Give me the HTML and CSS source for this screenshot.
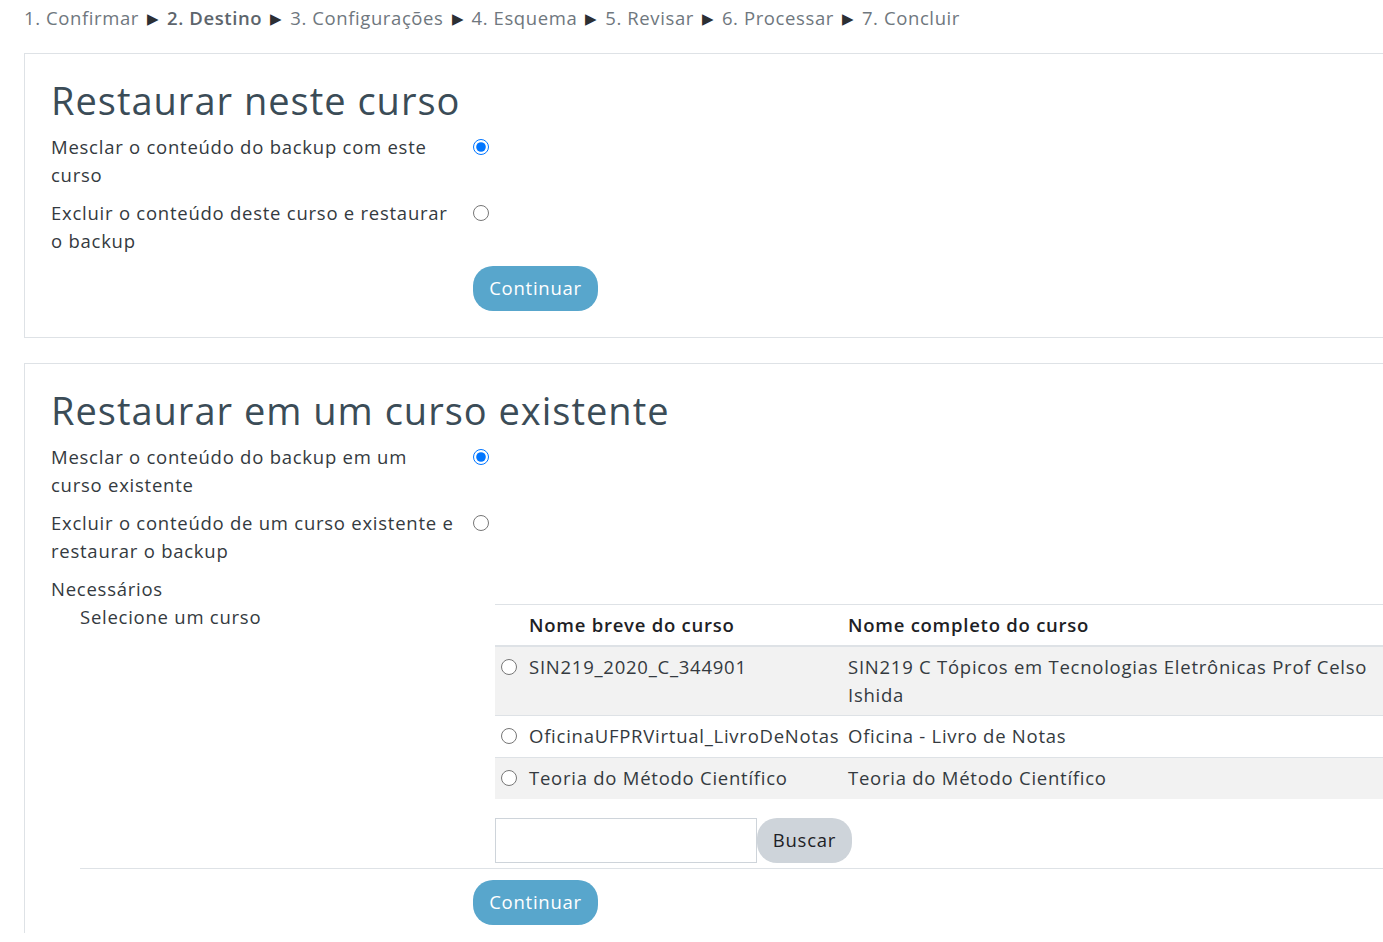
FILE: index.html
```html
<!DOCTYPE html>
<html lang="pt-BR">
<head>
<meta charset="utf-8">
<title>Restaurar</title>
<link rel="stylesheet" href="styles.css">
</head>
<body>
<div class="page">
  <nav class="steps">
    <span>1. Confirmar</span><span class="arrow">▶</span><span class="current">2. Destino</span><span class="arrow">▶</span><span>3. Configurações</span><span class="arrow">▶</span><span>4. Esquema</span><span class="arrow">▶</span><span>5. Revisar</span><span class="arrow">▶</span><span>6. Processar</span><span class="arrow">▶</span><span>7. Concluir</span>
  </nav>

  <section class="box box-first">
    <h2 class="title">Restaurar neste curso</h2>
    <div class="row">
      <div class="label">Mesclar o conteúdo do backup com este curso</div>
      <div class="field"><input type="radio" name="t1" checked></div>
    </div>
    <div class="row">
      <div class="label">Excluir o conteúdo deste curso e restaurar o backup</div>
      <div class="field"><input type="radio" name="t1"></div>
    </div>
    <div class="row actions">
      <div class="label"></div>
      <div class="field"><button class="btn btn-primary">Continuar</button></div>
    </div>
  </section>

  <section class="box box-second">
    <h2 class="title">Restaurar em um curso existente</h2>
    <div class="row">
      <div class="label">Mesclar o conteúdo do backup em um curso existente</div>
      <div class="field"><input type="radio" name="t2" checked></div>
    </div>
    <div class="row">
      <div class="label">Excluir o conteúdo de um curso existente e restaurar o backup</div>
      <div class="field"><input type="radio" name="t2"></div>
    </div>
    <div class="group-title">Necessários</div>
    <div class="nested">
      <div class="nested-label">Selecione um curso</div>
      <div class="nested-field">
        <table class="courses">
          <thead>
            <tr><th class="c-radio"></th><th class="c-short">Nome breve do curso</th><th class="c-full">Nome completo do curso</th></tr>
          </thead>
          <tbody>
            <tr class="odd"><td class="c-radio"><input type="radio" name="course"></td><td>SIN219_2020_C_344901</td><td>SIN219 C Tópicos em Tecnologias Eletrônicas Prof Celso Ishida</td></tr>
            <tr><td class="c-radio"><input type="radio" name="course"></td><td class="nowrap">OficinaUFPRVirtual_LivroDeNotas</td><td>Oficina - Livro de Notas</td></tr>
            <tr class="odd"><td class="c-radio"><input type="radio" name="course"></td><td>Teoria do Método Científico</td><td>Teoria do Método Científico</td></tr>
          </tbody>
        </table>
        <div class="search">
          <input type="text" class="search-input">
          <button class="btn btn-secondary">Buscar</button>
        </div>
      </div>
    </div>
    <div class="row actions actions-bottom">
      <div class="label"></div>
      <div class="field"><button class="btn btn-primary">Continuar</button></div>
    </div>
  </section>
</div>
</body>
</html>
```
FILE: styles.css
```css
html, body {
  margin: 0;
  padding: 0;
  overflow: hidden;
  background: #fff;
}
body {
  font-family: "Open Sans", "Noto Sans", sans-serif;
  font-size: 18.5px;
  letter-spacing: 0.75px;
  line-height: 28px;
  color: #343a40;
}
.page {
  padding-left: 24px;
  width: 1400px;
}
.steps {
  display: flex;
  gap: 8px;
  align-items: center;
  height: 36px;
  color: #6f777e;
  letter-spacing: 0.6px;
  white-space: nowrap;
}
.steps .current {
  font-weight: 600;
  color: #5d656c;
}
.steps .arrow {
  color: #2b2f33;
  font-size: 15px;
  letter-spacing: 0;
}
.box {
  border: 1px solid #dee2e6;
  padding: 18px 26px 0 26px;
}
.box-first {
  margin-top: 17px;
  padding-bottom: 26px;
}
.box-second {
  margin-top: 25px;
  padding-bottom: 8px;
  border-bottom: none;
}
.title {
  margin: 3px 0 8px 0;
  font-weight: 400;
  font-size: 38px;
  letter-spacing: 1px;
  line-height: 50px;
  color: #3b4c57;
}
.row {
  display: grid;
  grid-template-columns: 405px 1fr;
  column-gap: 17px;
  margin-bottom: 10px;
}
.field {
  display: flex;
  align-items: flex-start;
}
.field input[type="radio"] {
  width: 16px;
  height: 16px;
  margin: 6px 0 0 0;
}
.actions {
  margin-bottom: 0;
  margin-top: 11px;
}
.btn {
  font-family: inherit;
  font-size: 18.5px;
  letter-spacing: 0.75px;
  line-height: 28px;
  border: none;
  border-radius: 20px;
  padding: 8px 10px 9px;
  cursor: pointer;
}
.btn-primary {
  background: #58a6cc;
  color: #fff;
  width: 125px;
}
.btn-secondary {
  background: #ced4da;
  color: #1d2125;
  width: 95px;
}
.nested {
  display: grid;
  grid-template-columns: 386px 1fr;
  column-gap: 29px;
  margin-left: 29px;
  padding-bottom: 5px;
  border-bottom: 1px solid #dee2e6;
}
.courses {
  width: 100%;
  border-collapse: collapse;
  table-layout: fixed;
  margin-top: 1px;
}
.courses th, .courses td {
  text-align: left;
  vertical-align: top;
  padding: 6px 6px;
  border-top: 1px solid #dee2e6;
}
.courses th {
  font-weight: 600;
  color: #1d2125;
  border-bottom: 2px solid #dee2e6;
}
.courses .c-radio {
  width: 16px;
}
.courses .c-short {
  width: 307px;
}
.courses .nowrap {
  white-space: nowrap;
}
.courses td.c-radio input {
  width: 16px;
  height: 16px;
  margin: 6px 0 0 0;
}
.courses tr.odd td {
  background: #f2f2f2;
}
.search {
  display: flex;
  margin-top: 19px;
}
.search-input {
  width: 262px;
  height: 45px;
  box-sizing: border-box;
  border: 1px solid #ced4da;
  margin: 0;
  padding: 0 12px;
  font-family: inherit;
  font-size: 18px;
}
.actions-bottom {
  margin-top: 11px;
}
```
